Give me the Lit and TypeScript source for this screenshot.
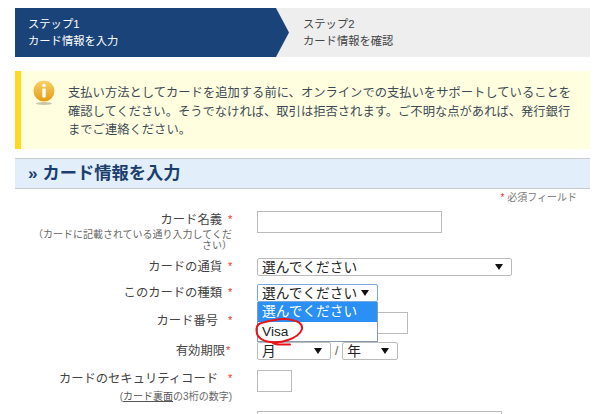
import { LitElement, html, css } from "lit";
import { customElement } from "lit/decorators.js";

@customElement("app-root")
export class AppRoot extends LitElement {
  static styles = css`
    :host { display: block; width: 600px; height: 414px; overflow: hidden; background: #fff; position: relative;
      font-family: "Liberation Sans", "Noto Sans CJK JP", sans-serif; color: #333; }
    .page { padding: 8px 10px 0 15px; display: flex; flex-direction: column; }
    .steps { display: flex; height: 49px; background: #eee; font-size: 11.3px; line-height: 17px; }
    .step1 { width: 274px; box-sizing: border-box; padding: 8px 0 0 13px; color: #fff; background: #1a4379;
      clip-path: polygon(0 0, 261px 0, 274px 50%, 261px 100%, 0 100%); }
    .step2 { padding: 8px 0 0 14px; color: #444; }
    .notice { margin-top: 14px; height: 78px; box-sizing: border-box; background: #ffffe0; border-left: 6px solid #ffd91e;
      display: flex; padding: 9px 10px 0 12px; gap: 13px; font-size: 12.3px; line-height: 18.5px; color: #3d4a55; }
    .notice svg { flex: none; margin-top: 0; }
    .notice p { margin: 4px 0 0; width: 508px; }
    h2 { margin: 9px 0 0; height: 31px; box-sizing: border-box; background: #e3eefb; border-top: 1px solid #c8ccd0; border-bottom: 1px solid #c8ccd0;
      font-size: 17.25px; line-height: 29px; font-weight: bold; color: #1a3f6f; padding-left: 13px; }
    .req { font-size: 10px; line-height: 14px; text-align: right; color: #777; padding-right: 13px; margin-top: 2px; height: 20px; }
    .star { color: #e33; }
    .row { display: grid; grid-template-columns: 207px 35px 1fr; align-items: start; }
    .label { font-size: 12.3px; line-height: 18px; text-align: right; color: #444; }
    .mark { font-size: 11px; line-height: 16px; color: #e33; padding-left: 6px; }
    .sub { font-size: 10px; line-height: 11px; color: #666; text-align: right; margin-left: 0; padding-left: 10px; width: 217px; box-sizing: border-box; }
    .sub u { color: #555; }
    .input { height: 22px; box-sizing: border-box; border: 1px solid #bbb; background: #fff; }
    .select { height: 18px; box-sizing: border-box; border: 1px solid #bbb; border-radius: 2px; background: #fff; position: relative;
      font-size: 13.7px; line-height: 18px; color: #222; padding-left: 4px; overflow: hidden; white-space: nowrap; }
    .select::after { content: ""; position: absolute; right: 8px; top: 5px; border: 4px solid transparent; border-top: 6px solid #111; border-bottom: 0; }
    .focus { border-color: #7aa7e0; }
    .fields { display: flex; align-items: center; gap: 4px; }
    .slash { font-size: 12px; color: #555; }
    .drop { position: absolute; left: 257px; top: 302px; width: 121px; height: 40px; box-sizing: border-box; background: #fff;
      border: 1px solid #8a9ab0; border-top: 0; font-size: 13.7px; line-height: 19px; color: #222; }
    .drop div { height: 20px; padding-left: 4px; }
    .drop .on { background: #2b90f5; color: #fff; height: 20px; }
    .scribble { position: absolute; left: 250px; top: 314px; pointer-events: none; }
    .nudge { margin-right: -3px; }
    .pad { padding-right: 4px; }
  `;

  render() {
    return html`
      <div class="page">
        <div class="steps">
          <div class="step1">ステップ1<br />カード情報を入力</div>
          <div class="step2">ステップ2<br />カード情報を確認</div>
        </div>
        <div class="notice">
          <svg width="22" height="26" viewBox="0 0 22 26">
            <defs>
              <linearGradient id="g" x1="0" y1="0" x2="0" y2="1"><stop offset="0" stop-color="#f8d267" /><stop offset="1" stop-color="#e49c12" /></linearGradient>
            </defs>
            <ellipse cx="11" cy="23.5" rx="8" ry="1.5" fill="#c9c4a8" />
            <circle cx="11" cy="11" r="10.5" fill="url(#g)" />
            <circle cx="11" cy="5.5" r="1.8" fill="#fff" />
            <rect x="9.3" y="8.5" width="3.4" height="9" rx="0.8" fill="#fff" />
          </svg>
          <p>支払い方法としてカードを追加する前に、オンラインでの支払いをサポートしていることを確認してください。そうでなければ、取引は拒否されます。ご不明な点があれば、発行銀行までご連絡ください。</p>
        </div>
        <h2>» カード情報を入力</h2>
        <div class="req"><span class="star">*</span> 必須フィールド</div>

        <div class="row" style="height:47px">
          <div>
            <div class="label" style="margin-top:0">カード名義</div>
            <div class="sub">（カードに記載されている通り入力してください）</div>
          </div>
          <div class="mark">*</div>
          <div class="input" style="width:185px"></div>
        </div>
        <div class="row" style="height:26px">
          <div class="label">カードの通貨</div>
          <div class="mark">*</div>
          <div class="select" style="width:255px">選んでください</div>
        </div>
        <div class="row" style="height:28px">
          <div class="label">このカードの種類</div>
          <div class="mark">*</div>
          <div class="select focus" style="width:121px">選んでください</div>
        </div>
        <div class="row" style="height:30px">
          <div class="label pad">カード番号</div>
          <div class="mark">*</div>
          <div class="input" style="width:151px"></div>
        </div>
        <div class="row" style="height:28px">
          <div class="label nudge">有効期限</div>
          <div class="mark" style="padding-left:4px">*</div>
          <div class="fields">
            <div class="select" style="width:74px">月</div>
            <span class="slash">/</span>
            <div class="select" style="width:56px">年</div>
          </div>
        </div>
        <div class="row" style="height:41px">
          <div>
            <div class="label pad">カードのセキュリティコード</div>
            <div class="sub" style="margin-top:2px;line-height:14px">(<u>カード裏面</u>の3桁の数字)</div>
          </div>
          <div class="mark">*</div>
          <div class="input" style="width:35px"></div>
        </div>
        <div class="row">
          <div></div><div></div>
          <div class="input" style="width:245px"></div>
        </div>
      </div>
      <div class="drop">
        <div class="on">選んでください</div>
        <div>Visa</div>
      </div>
      <svg class="scribble" width="60" height="36" viewBox="0 0 60 36" fill="none" stroke="#e8141c" stroke-width="2" stroke-linecap="round" stroke-linejoin="round">
        <path d="M10 9.5 C7 11 6 14 6.7 18 C7 23 12 27 20 28 C28 29 33 28 38 26 C44 24 50 21 52 15 C53 10 48 7 42 6 C36 4.5 30 5 25 6 C19 7 14 8 10 9.5" />
        <path d="M22 28 C23 30 26 31 40 30.5" />
      </svg>
    `;
  }
}
